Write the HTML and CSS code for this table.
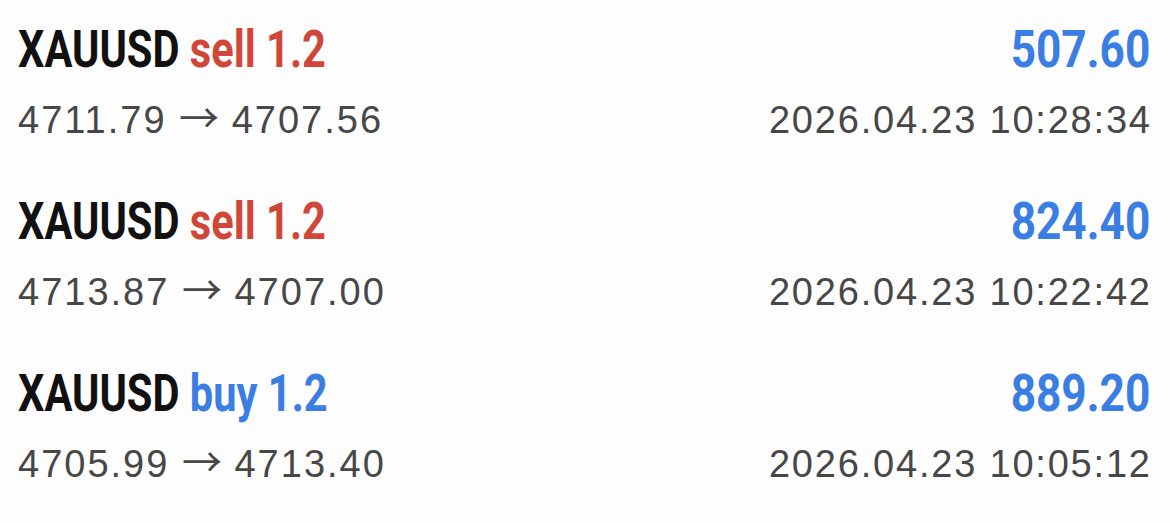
FILE: index.html
```html
<!DOCTYPE html>
<html>
<head>
<meta charset="utf-8">
<link rel="stylesheet" href="styles.css">
</head>
<body>
<ul class="deals">
  <li class="deal">
    <div class="line top">
      <span class="title"><span class="sym">XAUUSD</span> <span class="sell">sell 1.2</span></span>
      <span class="profit">507.60</span>
    </div>
    <div class="line sub">
      <span class="prices">4711.79 <span class="arrow">→</span> 4707.56</span>
      <span class="time">2026.04.23 10:28:34</span>
    </div>
  </li>
  <li class="deal">
    <div class="line top">
      <span class="title"><span class="sym">XAUUSD</span> <span class="sell">sell 1.2</span></span>
      <span class="profit">824.40</span>
    </div>
    <div class="line sub">
      <span class="prices">4713.87 <span class="arrow">→</span> 4707.00</span>
      <span class="time">2026.04.23 10:22:42</span>
    </div>
  </li>
  <li class="deal">
    <div class="line top">
      <span class="title"><span class="sym">XAUUSD</span> <span class="buy">buy 1.2</span></span>
      <span class="profit">889.20</span>
    </div>
    <div class="line sub">
      <span class="prices">4705.99 <span class="arrow">→</span> 4713.40</span>
      <span class="time">2026.04.23 10:05:12</span>
    </div>
  </li>
</ul>
</body>
</html>
```

FILE: styles.css
```css
html, body {
  margin: 0;
  padding: 0;
  background: #fdfdfd;
}

.deals {
  list-style: none;
  margin: 0;
  padding: 0 20px 0 18px;
}

.deal {
  height: 172px;
  box-sizing: border-box;
  padding-top: 22px;
  display: flex;
  flex-direction: column;
  gap: 20px;
}

.line {
  display: flex;
  justify-content: space-between;
  align-items: baseline;
}

.top {
  font-family: Roboto, "Liberation Sans", sans-serif;
  font-weight: 700;
  font-size: 52px;
  line-height: 56px;
}

.title {
  display: inline-block;
  color: #111111;
  transform: scaleX(0.8);
  transform-origin: left center;
  white-space: nowrap;
}

.sell { color: #d0473a; }
.buy { color: #3a7ee3; }

.profit {
  display: inline-block;
  color: #3a7ee3;
  transform: scaleX(0.85);
  transform-origin: right center;
}

.sub {
  font-family: "Liberation Sans", Arial, sans-serif;
  font-size: 38px;
  line-height: 44px;
  letter-spacing: 1.8px;
  color: #474747;
}

.prices {
  letter-spacing: 2px;
}

.arrow {
  font-family: "Noto Sans CJK SC", "DejaVu Sans", sans-serif;
  font-size: 40px;
  line-height: 0;
  letter-spacing: 0;
}

.time {
  margin-right: -1.8px;
}
```
